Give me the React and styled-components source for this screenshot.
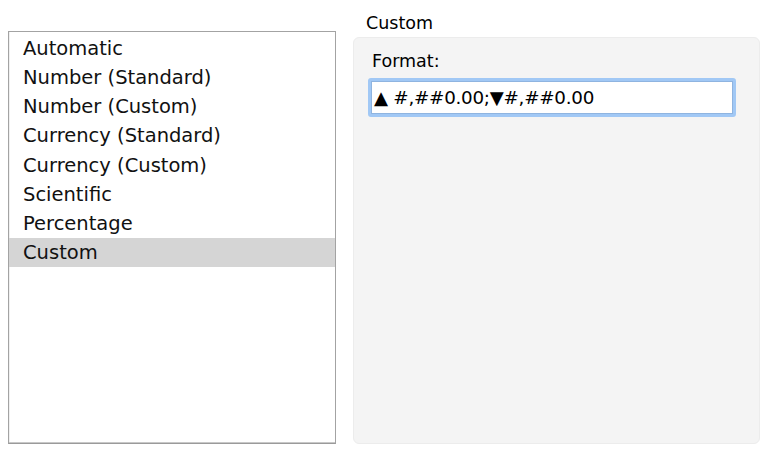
import React from "react";
import styled, { createGlobalStyle } from "styled-components";

const Global = createGlobalStyle`
  html, body { margin: 0; padding: 0; background: #ffffff; }
  body { font-family: "DejaVu Sans", "Liberation Sans", sans-serif; color: #000; }
`;

const Page = styled.div`
  display: flex;
  align-items: flex-start;
  padding-left: 8px;
  width: 767px;
  height: 455px;
  box-sizing: border-box;
`;

const ListBox = styled.div`
  margin-top: 31px;
  width: 328px;
  height: 413px;
  box-sizing: border-box;
  border: 1px solid #a3a3a3;
  border-bottom-color: #9a9a9a;
  box-shadow: inset 0 -1px 0 #c8c8c8, inset 1px 0 0 #f0f0f0;
  background: #fff;
  padding-top: 2px;
  display: flex;
  flex-direction: column;
`;

const Row = styled.div`
  height: 29.15px;
  line-height: 29px;
  padding-left: 14px;
  font-size: 19.5px;
  color: #111;
  background: ${(p) => (p.$selected ? "#d5d5d5" : "transparent")};
  white-space: nowrap;
`;

const Side = styled.div`
  margin-left: 17px;
  width: 407px;
  display: flex;
  flex-direction: column;
`;

const Heading = styled.div`
  font-size: 17.5px;
  line-height: 20px;
  margin-top: 13px;
  padding-left: 13px;
  height: 24px;
`;

const Panel = styled.div`
  height: 407px;
  box-sizing: border-box;
  background: #f4f4f4;
  border: 1px solid #ececec;
  border-radius: 6px;
  padding: 12px 0 0 14px;
  display: flex;
  flex-direction: column;
`;

const Label = styled.div`
  font-size: 17.5px;
  line-height: 22px;
  padding-left: 4px;
  height: 28px;
`;

const Field = styled.div`
  width: 368px;
  height: 39px;
  box-sizing: border-box;
  border: 3px solid #a1c8f5;
  border-radius: 3px;
  background: #fff;
  box-shadow: inset 0 0 0 1px #8fb4e0;
  display: flex;
  align-items: center;
  padding-left: 3px;
  font-size: 18.3px;
  letter-spacing: -0.25px;
  white-space: nowrap;
`;

const items = [
  "Automatic",
  "Number (Standard)",
  "Number (Custom)",
  "Currency (Standard)",
  "Currency (Custom)",
  "Scientific",
  "Percentage",
  "Custom",
];

export default function App() {
  return (
    <>
      <Global />
      <Page>
        <ListBox>
          {items.map((t) => (
            <Row key={t} $selected={t === "Custom"}>
              {t}
            </Row>
          ))}
        </ListBox>
        <Side>
          <Heading>Custom</Heading>
          <Panel>
            <Label>Format:</Label>
            <Field>▲ #,##0.00;▼#,##0.00</Field>
          </Panel>
        </Side>
      </Page>
    </>
  );
}
